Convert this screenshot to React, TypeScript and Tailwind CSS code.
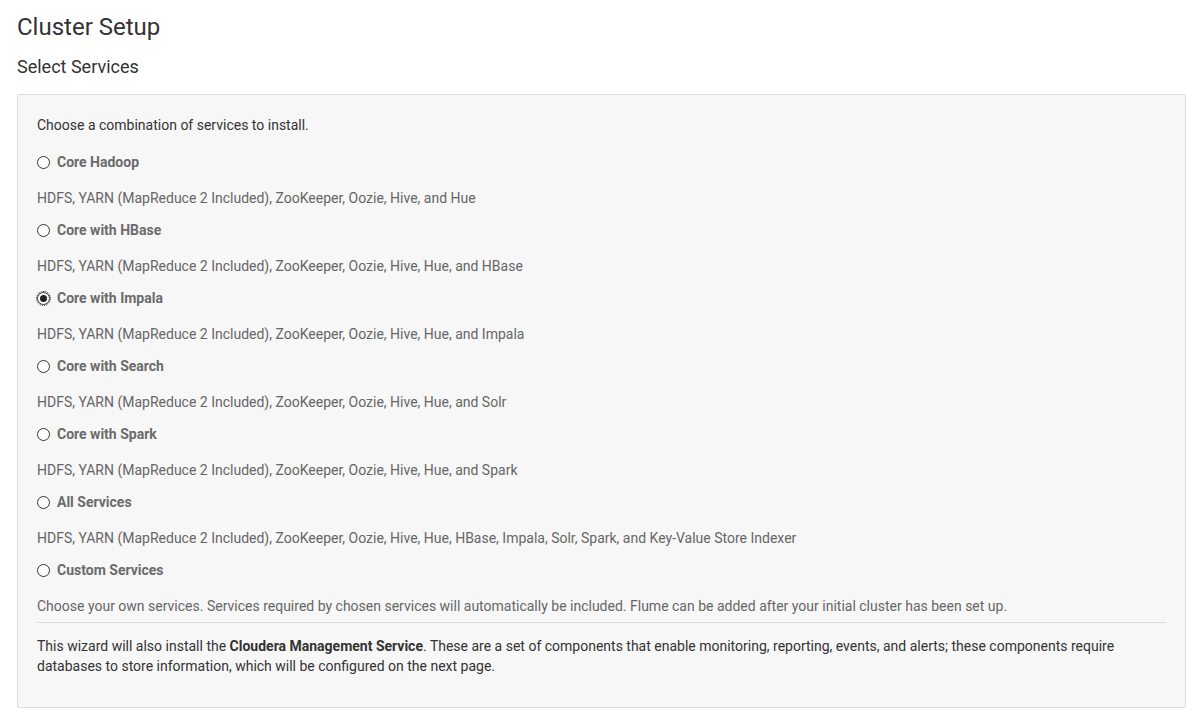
const options = [
  {
    label: "Core Hadoop",
    desc: "HDFS, YARN (MapReduce 2 Included), ZooKeeper, Oozie, Hive, and Hue",
  },
  {
    label: "Core with HBase",
    desc: "HDFS, YARN (MapReduce 2 Included), ZooKeeper, Oozie, Hive, Hue, and HBase",
  },
  {
    label: "Core with Impala",
    desc: "HDFS, YARN (MapReduce 2 Included), ZooKeeper, Oozie, Hive, Hue, and Impala",
    checked: true,
  },
  {
    label: "Core with Search",
    desc: "HDFS, YARN (MapReduce 2 Included), ZooKeeper, Oozie, Hive, Hue, and Solr",
  },
  {
    label: "Core with Spark",
    desc: "HDFS, YARN (MapReduce 2 Included), ZooKeeper, Oozie, Hive, Hue, and Spark",
  },
  {
    label: "All Services",
    desc: "HDFS, YARN (MapReduce 2 Included), ZooKeeper, Oozie, Hive, Hue, HBase, Impala, Solr, Spark, and Key-Value Store Indexer",
  },
  {
    label: "Custom Services",
    desc: "Choose your own services. Services required by chosen services will automatically be included. Flume can be added after your initial cluster has been set up.",
  },
];

function Radio({ checked }: { checked?: boolean }) {
  return (
    <span className="relative flex h-[13px] w-[13px] shrink-0 items-center justify-center rounded-full border border-[#333] bg-white">
      {checked && <span className="h-[7px] w-[7px] rounded-full bg-[#222]" />}
      {checked && (
        <span className="absolute -inset-[2px] rounded-full border border-dotted border-[#333]" />
      )}
    </span>
  );
}

export default function App() {
  return (
    <div
      className="min-h-screen bg-white px-[17px] pt-[12px] text-[14px] leading-[20px] text-[#333]"
      style={{ fontFamily: "Roboto, 'Liberation Sans', sans-serif" }}
    >
      <h1 className="text-[24px] leading-[30px] text-[#333]">Cluster Setup</h1>
      <h2 className="mt-[13px] text-[18px] leading-[24px] text-[#333]">Select Services</h2>
      <div className="mt-[15px] mr-[-5px] rounded-[2px] border border-[#ddd] bg-[#f7f7f7] px-[19px] pt-[20px] pb-[31px]">
        <p className="mb-[17px]">Choose a combination of services to install.</p>
        {options.map((o) => (
          <div key={o.label} className="mb-[12px]">
            <label className="flex items-center gap-[7px] font-bold text-[#6b6b6b]">
              <Radio checked={o.checked} />
              {o.label}
            </label>
            <p className="mt-[16px] text-[#666]">{o.desc}</p>
          </div>
        ))}
        <hr className="mt-[-6px] border-t border-[#ddd]" />
        <p className="mt-[13px]">
          This wizard will also install the <b>Cloudera Management Service</b>. These are a set of
          components that enable monitoring, reporting, events, and alerts; these components
          require databases to store information, which will be configured on the next page.
        </p>
      </div>
    </div>
  );
}
